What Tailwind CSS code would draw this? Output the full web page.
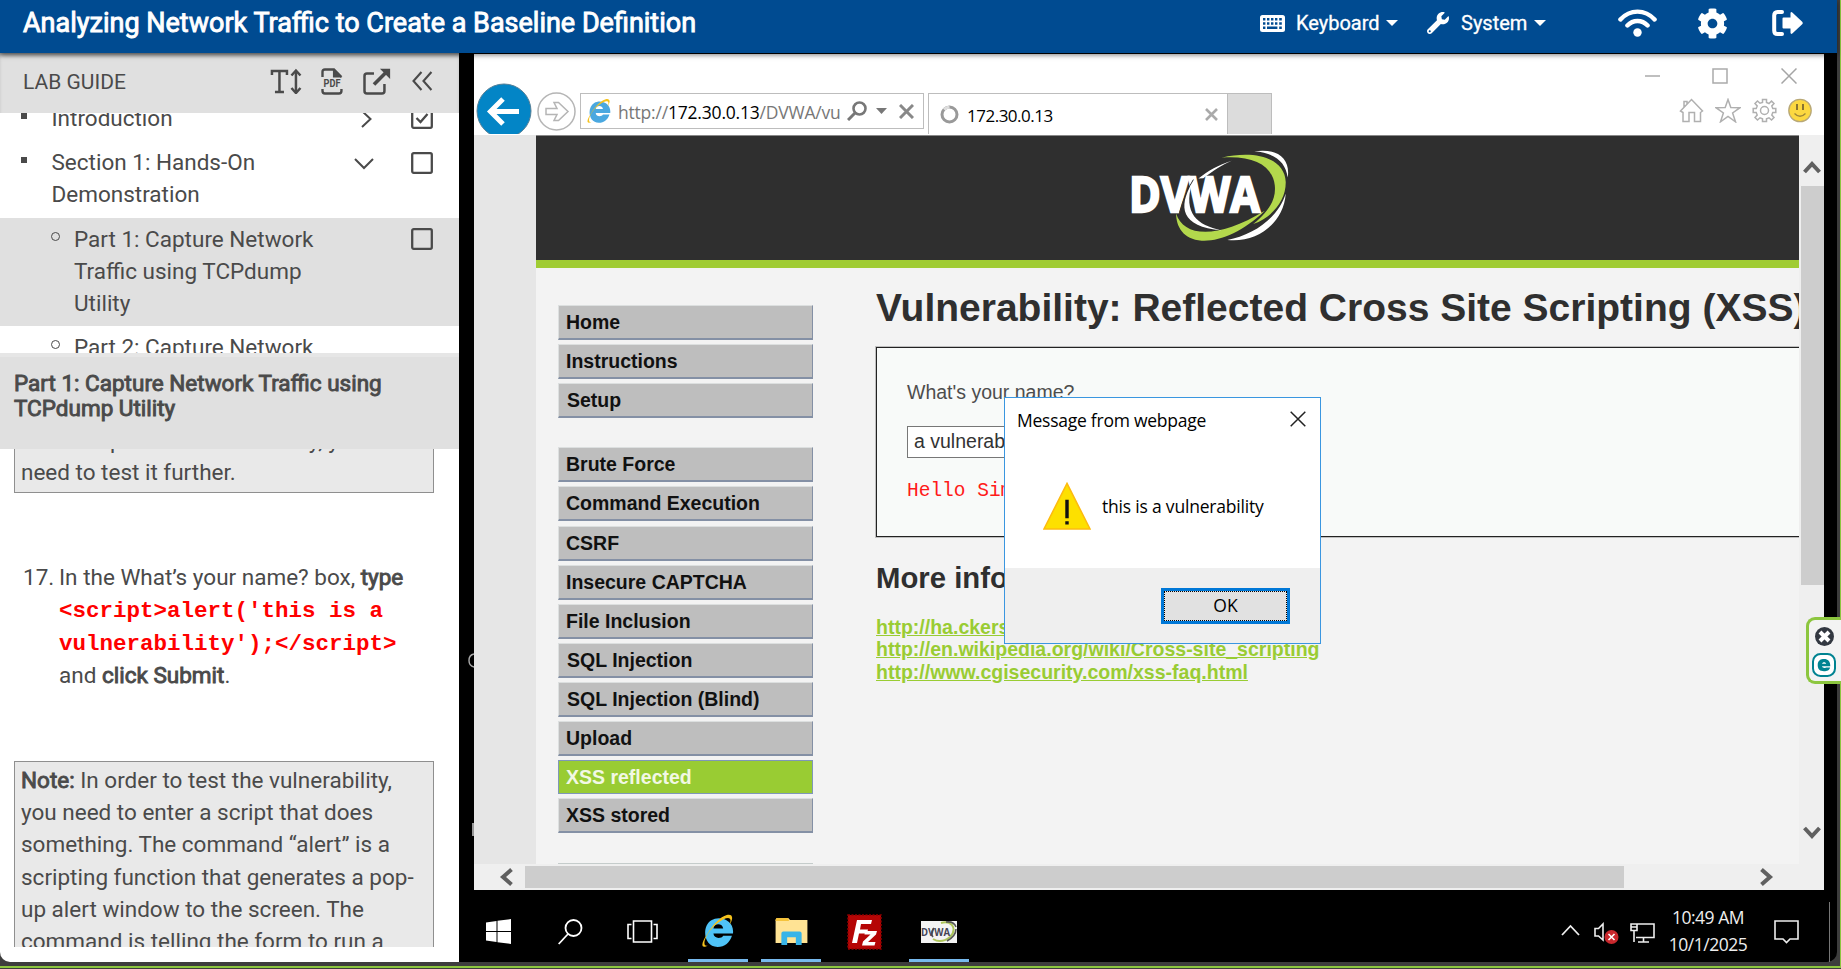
<!DOCTYPE html>
<html lang="en">
<head>
<meta charset="utf-8">
<title>Analyzing Network Traffic to Create a Baseline Definition</title>
<script src="https://cdn.jsdelivr.net/npm/@tailwindcss/browser@4"></script>
</head>
<body class="w-[1841px] h-[969px] overflow-hidden bg-[#3d3d3d] font-['Roboto',sans-serif] text-[#4a4a4a]">
<div class="relative flex h-[968px] flex-col border-b-2 border-r border-[#8cc63f] pr-[3px] pb-[4px]">

  <!-- Top bar -->
  <header class="relative z-10 flex h-[53px] shrink-0 items-start bg-[#004b91] text-white shadow-[0_2px_5px_rgba(0,0,0,0.5)]">
    <h1 class="ml-[23px] flex h-[46px] w-[680px] items-center whitespace-nowrap text-[27px] [-webkit-text-stroke:0.9px_white]">Analyzing Network Traffic to Create a Baseline Definition</h1>
    <div class="ml-[557px] flex h-[46px] items-center text-[20px]">
      <svg class="w-[25px] h-[17px]" viewBox="0 0 25 17"><rect width="25" height="17" rx="2.5" fill="#fff"/><g fill="#004b91"><path d="M3 3h2.4v2.6H3zM7 3h2.4v2.6H7zM11 3h2.4v2.6H11zM15 3h2.4v2.6H15zM19.2 3h2.6v2.6h-2.6zM3 7.2h2.4v2.6H3zM7 7.2h2.4v2.6H7zM11 7.2h2.4v2.6H11zM15 7.2h2.4v2.6H15zM19.2 7.2h2.6v2.6h-2.6zM3 11.4h2.4V14H3zM7 11.4h10.4V14H7zM19.2 11.4h2.6V14h-2.6z"/></g></svg>
      <span class="ml-[11px] w-[83px] whitespace-nowrap [-webkit-text-stroke:0.3px_white]">Keyboard</span>
      <svg class="ml-[7px] w-[12px] h-[6px]" viewBox="0 0 12 6"><path d="M0 0h12L6 6z" fill="#fff"/></svg>
      <svg class="ml-[29px] w-[22px] h-[22px]" viewBox="0 0 512 512"><path fill="#fff" d="M507.7 109.1c-2.2-9-13.500-12.100-20.100-5.500l-74.400 74.400-67.900-11.300L334 98.900l74.400-74.400c6.600-6.600 3.400-17.900-5.700-20.200-47.400-11.700-99.600.9-136.600 37.900-39.600 39.600-50.500 97.100-34.100 147.200L18.700 402.800c-25 25-25 65.500 0 90.500s65.500 25 90.500 0l213.200-213.200c50.100 16.700 107.500 5.700 147.400-34.200 37.100-37.100 49.700-89.300 37.900-136.800zM64 472c-13.200 0-24-10.800-24-24s10.700-24 24-24 24 10.700 24 24-10.700 24-24 24z"/></svg>
      <span class="ml-[12px] w-[66px] whitespace-nowrap [-webkit-text-stroke:0.3px_white]">System</span>
      <svg class="ml-[7px] w-[12px] h-[6px]" viewBox="0 0 12 6"><path d="M0 0h12L6 6z" fill="#fff"/></svg>
      <svg class="ml-[72px] w-[39px] h-[28px]" viewBox="0 0 39 28" fill="none" stroke="#fff" stroke-width="4.4" stroke-linecap="round"><path d="M2.400 10.500C12 0 27 0 36.600 10.500M9.400 16.500C15 10.500 24 10.500 29.600 16.500"/><circle cx="19.500" cy="23.500" r="4.200" fill="#fff" stroke="none"/></svg>
      <svg class="ml-[40px] w-[31px] h-[31px]" viewBox="0 0 512 512"><path fill="#fff" d="M487.4 315.700l-42.600-24.600c4.300-23.200 4.300-47 0-70.200l42.600-24.600c4.900-2.800 7.100-8.600 5.500-14-11.100-35.600-30-67.800-54.700-94.600-3.800-4.100-10-5.100-14.800-2.300L380.800 110c-17.900-15.400-38.500-27.300-60.800-35.100V25.800c0-5.600-3.900-10.500-9.400-11.700-36.700-8.200-74.300-7.800-109.200 0-5.500 1.200-9.400 6.100-9.400 11.700V75c-22.200 7.900-42.800 19.800-60.800 35.100L88.700 85.500c-4.900-2.800-11-1.900-14.800 2.300-24.700 26.700-43.600 58.900-54.700 94.600-1.700 5.400.6 11.200 5.500 14L67.300 221c-4.300 23.200-4.300 47 0 70.200l-42.600 24.600c-4.900 2.800-7.100 8.600-5.500 14 11.100 35.600 30 67.800 54.700 94.600 3.800 4.100 10 5.100 14.800 2.300l42.600-24.600c17.900 15.400 38.500 27.300 60.800 35.100v49.200c0 5.600 3.900 10.500 9.400 11.700 36.700 8.200 74.300 7.800 109.200 0 5.500-1.200 9.400-6.100 9.400-11.700v-49.200c22.200-7.900 42.800-19.800 60.800-35.100l42.600 24.600c4.900 2.800 11 1.900 14.800-2.300 24.700-26.700 43.600-58.900 54.700-94.600 1.500-5.500-.7-11.300-5.600-14.100zM256 336c-44.100 0-80-35.900-80-80s35.900-80 80-80 80 35.900 80 80-35.900 80-80 80z"/></svg>
      <svg class="ml-[44px] w-[31px] h-[28px]" viewBox="0 0 31 28"><path fill="none" stroke="#fff" stroke-width="4" stroke-linecap="round" stroke-linejoin="round" d="M10 3H5.500Q2.200 3 2.200 6.500V21.500Q2.200 25 5.500 25H10"/><path fill="#fff" d="M10.500 9.500Q10.500 8.500 11.500 8.500H18.500V4.200Q18.700 2.300 20.300 3.400L30.200 12.700Q31.300 14 30.200 15.300L20.300 24.600Q18.700 25.600 18.500 23.800V19.500H11.500Q10.500 19.500 10.500 18.500Z"/></svg>
    </div>
  </header>

  <div class="flex min-h-0 flex-1">
    <!-- Lab guide -->
    <aside class="flex w-[459px] shrink-0 flex-col overflow-hidden rounded-bl-[10px] bg-white text-[22.5px] leading-[32px]">
      <div class="flex h-[60px] shrink-0 items-center bg-[#e0e0e0] pb-[4px] pl-[23px] pr-[26px] shadow-[inset_0_4px_4px_-2px_rgba(0,0,0,0.35)]">
        <span class="w-[248px] pt-[1px] text-[21px] whitespace-nowrap">LAB GUIDE</span>
        <svg class="w-[33px] h-[26px]" viewBox="0 0 32 26" fill="none" stroke="#4a4a4a" stroke-width="2.500"><path d="M1.500 7V3H16.500V7M9 3V24M4.500 24H13.500M25.500 3V24"/><path d="M21 7.500L25.500 2.500L30 7.500M21 20L25.500 25L30 20" /></svg>
        <svg class="ml-[18px] w-[22px] h-[27px]" viewBox="0 0 22 27"><path d="M1.500 9V4Q1.500 1.500 4 1.500H13L20.500 9M1.500 21V23Q1.500 25.500 4 25.500H18Q20.500 25.500 20.500 23V21" fill="none" stroke="#4a4a4a" stroke-width="2.400"/><path d="M12 1L21 9.500H12z" fill="#4a4a4a"/><text x="11" y="19.500" text-anchor="middle" textLength="17" lengthAdjust="spacingAndGlyphs" font-family="Roboto" font-weight="700" font-size="11.500" fill="#4a4a4a">PDF</text></svg>
        <svg class="ml-[20px] w-[28px] h-[27px]" viewBox="0 0 28 27"><path d="M11 5.500H4Q1.500 5.500 1.500 8V23Q1.500 25.500 4 25.500H19Q21.500 25.500 21.500 23V16" fill="none" stroke="#4a4a4a" stroke-width="2.500"/><path d="M11 16.500L23 4.500" stroke="#4a4a4a" stroke-width="3.600"/><path d="M17 .8H27.200V11z" fill="#4a4a4a"/></svg>
        <svg class="ml-[21px] w-[21px] h-[20px]" viewBox="0 0 21 20" fill="none" stroke="#4a4a4a" stroke-width="2.100"><path d="M9.500 1L1.500 10L9.500 19M19.500 1L11.500 10L19.500 19"/></svg>
      </div>

      <div class="h-[240px] shrink-0 overflow-hidden">
        <div class="-mt-[11px] flex h-[44px] items-start">
          <i class="ml-[21px] mt-[11px] size-[6px] bg-[#4a4a4a]"></i>
          <span class="ml-[24.500px] w-[300px]">Introduction</span>
          <svg class="ml-[9.500px] mt-[8px] w-[11px] h-[18px]" viewBox="0 0 11 18" fill="none" stroke="#4a4a4a" stroke-width="2"><path d="M1 1L9.500 9L1 17"/></svg>
          <svg class="ml-[38.500px] mt-[5px] w-[22px] h-[22px]" viewBox="0 0 22 22" fill="none" stroke="#4a4a4a" stroke-width="2.300"><rect x="1.200" y="1.200" width="19.600" height="19.600" rx="1.500"/><path d="M5.500 11L9.500 15L16.500 7"/></svg>
        </div>
        <div class="flex h-[72px] items-start">
          <i class="ml-[21px] mt-[11px] size-[6px] bg-[#4a4a4a]"></i>
          <span class="ml-[24.500px] w-[250px]">Section 1: Hands-On Demonstration</span>
          <svg class="ml-[52.500px] mt-[12px] w-[20px] h-[12px]" viewBox="0 0 20 12" fill="none" stroke="#4a4a4a" stroke-width="2"><path d="M1 1L10 10L19 1"/></svg>
          <svg class="ml-[36.500px] mt-[6px] w-[22px] h-[22px]" viewBox="0 0 22 22" fill="none" stroke="#4a4a4a" stroke-width="2.300"><rect x="1.200" y="1.200" width="19.600" height="19.600" rx="1.500"/></svg>
        </div>
        <div class="flex h-[108px] items-start bg-[#e0e0e0] pt-[5px]">
          <i class="ml-[51px] mt-[9px] size-[9px] rounded-full border border-[#4a4a4a]"></i>
          <span class="ml-[14px] w-[250px]">Part 1: Capture Network Traffic using TCPdump Utility</span>
          <svg class="ml-[86.500px] mt-[5px] w-[22px] h-[22px]" viewBox="0 0 22 22" fill="none" stroke="#4a4a4a" stroke-width="2.300"><rect x="1.200" y="1.200" width="19.600" height="19.600" rx="1.500"/></svg>
        </div>
        <div class="flex items-start pt-[5px]">
          <i class="ml-[51px] mt-[9px] size-[9px] rounded-full border border-[#4a4a4a]"></i>
          <span class="ml-[14px] w-[250px]">Part 2: Capture Network</span>
        </div>
      </div>

      <div class="h-[96px] shrink-0 border-t-4 border-[#e6e6e6] bg-[#e0e0e0] pl-[14px] pt-[14px] text-[22.500px] leading-[25px] [-webkit-text-stroke:0.9px_#4a4a4a]">Part 1: Capture Network Traffic using<br>TCPdump Utility</div>

      <div class="h-[498px] shrink-0 overflow-hidden px-[14px] text-[22.500px]">
        <div class="-mt-[31px] h-[75px] w-[420px] border border-[#8f8f8f] bg-[#e9e9e9] px-[6px] pt-[5px]">This is a possible vulnerability, you<br>need to test it further.</div>
        <div class="mt-[68px] flex h-[130px]">
          <span class="ml-[9px] w-[36px] shrink-0">17.</span>
          <p class="w-[350px] leading-[32.800px] whitespace-nowrap">In the What’s your name? box, <span class="[-webkit-text-stroke:0.9px_#4a4a4a]">type</span><br><code class="relative -top-px font-['Liberation_Mono',monospace] font-bold leading-none text-[#ff0000] text-[22.500px]">&lt;script&gt;alert('this is a<br>vulnerability');&lt;/script&gt;</code><br>and <span class="[-webkit-text-stroke:0.9px_#4a4a4a]">click Submit</span>.</p>
        </div>
        <div class="mt-[70px] h-[220px] w-[420px] border border-[#8f8f8f] bg-[#e9e9e9] px-[6px] pt-[2px] leading-[32.200px] whitespace-nowrap"><span class="[-webkit-text-stroke:0.9px_#4a4a4a]">Note:</span> In order to test the vulnerability,<br>you need to enter a script that does<br>something. The command “alert” is a<br>scripting function that generates a pop-<br>up alert window to the screen. The<br>command is telling the form to run a</div>
      </div>
    </aside>

    <!-- Remote desktop -->
    <main class="relative flex min-w-0 flex-1 flex-col rounded-br-[10px] bg-black">
      <svg class="absolute left-[9px] top-[600px] w-[6px] h-[15px]" viewBox="0 0 6 15" fill="none" stroke="#aaa" stroke-width="1.400"><path d="M6 1Q1 2 1 7.500T6 14"/></svg>
      <div class="absolute left-[13px] top-[770px] h-[13px] w-[2px] bg-[#999]"></div>

      <section class="ml-[15px] mt-px flex h-[836px] w-[1350px] shrink-0 flex-col bg-white">
        <!-- Browser chrome -->
        <div class="flex h-[81px] shrink-0 items-start font-['Open_Sans',sans-serif]">
          <svg class="ml-[2px] mt-[29px] w-[56px] h-[51px]" viewBox="0 0 56 51"><circle cx="28" cy="28" r="27" fill="#0385c6" stroke="#557f96" stroke-width="1"/><path d="M43 28.500H15M27 16L14.500 28.500L27 41" fill="none" stroke="#fff" stroke-width="5"/></svg>
          <svg class="ml-[5px] mt-[38px] w-[39px] h-[39px]" viewBox="0 0 39 39" fill="none" stroke="#b5b5b5" stroke-width="1.500"><circle cx="19.500" cy="19.500" r="18.500"/><path d="M9 16.500H20L17 10.500H21.500L31 19.500L21.500 28.500H17L20 22.500H9Z"/></svg>
          <div class="ml-[4px] mt-[39px] flex h-[36px] w-[344px] items-center border-[1.500px] border-[#bdbdbd] pl-[4px]">
            <svg class="w-[26px] h-[26px]" viewBox="0 0 34 34"><path d="M30.500 21.500H23.500C22 24.500 14.500 25 14 19.500H33C34.500 6 20 1.500 12 6.500C2.500 12 4 32.500 18 32.500C25 32.500 30 28 32 21.500ZM14 14.500C14.500 9 23 9 23.500 14.500Z" fill="#4aa8e0"/><path d="M8 20C2 29 1 35 9 31C4 33 4 27 9 19C15 10 27 2 30 5C31.500 6.500 30 10 29 12C34 5 33 0 27 1.500C21 3 13 11 8 20Z" fill="#f5c21c"/></svg>
            <span class="ml-[7px] mt-[2px] w-[223px] whitespace-nowrap text-[17.500px] text-[#777] tracking-[-0.200px]">http://<span class="text-black">172.30.0.13</span>/DVWA/vu</span>
            <svg class="ml-[6px] w-[20px] h-[20px]" viewBox="0 0 20 20" fill="none" stroke="#777" stroke-width="2.600"><circle cx="12.500" cy="7.500" r="6"/><path d="M8 12L1 19" stroke-width="3"/></svg>
            <svg class="ml-[9px] w-[11px] h-[6px]" viewBox="0 0 11 6"><path d="M0 0H11L5.500 6z" fill="#777"/></svg>
            <svg class="ml-[12px] w-[15px] h-[15px]" viewBox="0 0 15 15" stroke="#888" stroke-width="3"><path d="M1 1L14 14M14 1L1 14"/></svg>
          </div>
          <div class="ml-[4px] mt-[39px] flex h-[41px] w-[299px] items-center border-l-[1.500px] border-t-[1.500px] border-[#bdbdbd] pl-[11px] text-[17px] text-black">
            <svg class="w-[19px] h-[19px]" viewBox="0 0 19 19" fill="none" stroke-width="3"><circle cx="9.500" cy="9.500" r="7.500" stroke="#999"/><path d="M4 4.500Q6 2.300 9.500 2" stroke="#ddd"/></svg>
            <span class="ml-[8px] mt-[3px] w-[236px] whitespace-nowrap tracking-[-0.500px]">172.30.0.13</span>
            <svg class="ml-[2px] w-[13px] h-[13px]" viewBox="0 0 13 13" stroke="#aaa" stroke-width="2.600"><path d="M1 1L12 12M12 1L1 12"/></svg>
          </div>
          <div class="mt-[39px] h-[41px] w-[45px] border-x-[1.500px] border-t-[1.500px] border-[#bdbdbd] bg-[#dcdcdc]"></div>
          <div class="ml-auto flex flex-col items-end pr-[12px] pt-[14px]">
            <div class="flex items-center pr-[15px]">
              <svg class="w-[15px] h-[2px]" viewBox="0 0 15 2"><path d="M0 1H15" stroke="#aaa" stroke-width="1.500"/></svg>
              <svg class="ml-[52px] w-[16px] h-[16px]" viewBox="0 0 16 16"><rect x="1" y="1" width="14" height="14" fill="none" stroke="#aaa" stroke-width="1.500"/></svg>
              <svg class="ml-[53px] w-[16px] h-[16px]" viewBox="0 0 16 16"><path d="M.5 .5L15.500 15.500M15.500 .5L.5 15.500" stroke="#a5a5a5" stroke-width="1.500"/></svg>
            </div>
            <div class="mt-[14px] flex items-center gap-[11px]">
              <svg class="w-[25px] h-[25px]" viewBox="0 0 25 25" fill="none" stroke="#b0b0b0" stroke-width="1.500"><path d="M1.500 13L12.500 1.500L23.500 13L21.500 14.500V23.500H15.500V14.500H10V23.500H4V14.500L1.500 13ZM5 9V3.500H8V6"/></svg>
              <svg class="w-[26px] h-[25px]" viewBox="0 0 26 25" fill="none" stroke="#b0b0b0" stroke-width="1.500"><path d="M13 1.500L15.800 9.500L25 9.700L17.600 15L20.500 23.800L13 18.500L5.500 23.800L8.400 15L1 9.700L10.200 9.500Z"/></svg>
              <svg class="w-[25px] h-[25px]" viewBox="0 0 25 25" fill="none" stroke="#b0b0b0" stroke-width="1.500"><path d="M10.500 1.500H14.500V4.500L17 5.500L19.500 3L22 5.500L19.800 8L20.800 10.500H23.800V14.500H20.800L19.800 17L22 19.500L19.500 22L17 19.800L14.500 20.800V23.500H10.500V20.800L8 19.800L5.500 22L3 19.500L5.200 17L4.200 14.500H1.200V10.500H4.200L5.200 8L3 5.500L5.500 3L8 5.200L10.500 4.500Z"/><circle cx="12.500" cy="12.500" r="4"/></svg>
              <svg class="w-[24px] h-[25px]" viewBox="0 0 24 25"><circle cx="12" cy="12.500" r="11.200" fill="#fcd840" stroke="#b8a878" stroke-width="1.300"/><path d="M9 6V12M15 6V12" stroke="#8a7430" stroke-width="2"/><path d="M6.500 15.500Q12 21 17.500 15.500" fill="none" stroke="#a08838" stroke-width="1.400"/></svg>
            </div>
          </div>
        </div>

        <div class="flex min-h-0 flex-1">
          <!-- Web page -->
          <div class="w-[62px] shrink-0 bg-[#e6e6e6]"></div>
          <div class="flex w-[1262.500px] shrink-0 flex-col overflow-hidden bg-[#f3f3f3] font-['Liberation_Sans',sans-serif]">
            <div class="flex h-[133px] shrink-0 items-start border-b-8 border-t border-b-[#a0cc33] border-t-[#888] bg-[#2f2f2f] pl-[594px] pt-[13px]">
              <svg class="w-[160px] h-[93px]" viewBox="630 296 480 280">
                <path d="M1003 303C1080 292 1112 330 1104 382C1098 335 1065 308 1003 303Z" fill="#fff"/>
                <path d="M1098 430C1092 520 1010 580 922 570C1000 555 1075 505 1098 430Z" fill="#fff"/>
                <path d="M905 322C1010 298 1095 325 1098 395C1099 450 1060 500 1000 522C1045 485 1070 450 1065 405C1058 345 1000 315 905 322Z" fill="#b3d84c"/>
                <path d="M768 490C790 560 890 570 1035 482C970 545 900 575 845 572C790 568 768 530 768 490Z" fill="#b3d84c"/>
                <path d="M935 331C895 345 865 360 835 385L850 384C880 360 905 345 935 331Z" fill="#fff"/>
                <text x="626" y="486" textLength="394" lengthAdjust="spacingAndGlyphs" font-family="Open Sans" font-weight="700" font-size="146" fill="#fff" stroke="#fff" stroke-width="7">DVWA</text>
                <path d="M820 388Q794 430 778 488" fill="none" stroke="#2f2f2f" stroke-width="3"/>
                <path d="M815 400C775 470 780 530 905 541C830 525 790 490 815 400Z" fill="#fff"/>
              </svg>
            </div>
            <div class="flex min-h-0 flex-1">
              <nav class="ml-[22px] mt-[37px] flex w-[255px] shrink-0 flex-col gap-[4.050px] text-[19.500px] font-bold leading-[32px] text-[#111]">
                <a class="h-[35px] border border-b-2 border-[#dcdfdf] border-b-[#8490a5] border-r-[#8490a5] bg-[#bebebe] pl-[7px]">Home</a>
                <a class="h-[35px] border border-b-2 border-[#dcdfdf] border-b-[#8490a5] border-r-[#8490a5] bg-[#bebebe] pl-[7px]">Instructions</a>
                <a class="mb-[25.300px] h-[35px] border border-b-2 border-[#dcdfdf] border-b-[#8490a5] border-r-[#8490a5] bg-[#bebebe] pl-[8px]">Setup</a>
                <a class="h-[35px] border border-b-2 border-[#dcdfdf] border-b-[#8490a5] border-r-[#8490a5] bg-[#bebebe] pl-[7px]">Brute Force</a>
                <a class="h-[35px] border border-b-2 border-[#dcdfdf] border-b-[#8490a5] border-r-[#8490a5] bg-[#bebebe] pl-[7px]">Command Execution</a>
                <a class="h-[35px] border border-b-2 border-[#dcdfdf] border-b-[#8490a5] border-r-[#8490a5] bg-[#bebebe] pl-[7px]">CSRF</a>
                <a class="h-[35px] border border-b-2 border-[#dcdfdf] border-b-[#8490a5] border-r-[#8490a5] bg-[#bebebe] pl-[7px]">Insecure CAPTCHA</a>
                <a class="h-[35px] border border-b-2 border-[#dcdfdf] border-b-[#8490a5] border-r-[#8490a5] bg-[#bebebe] pl-[7px]">File Inclusion</a>
                <a class="h-[35px] border border-b-2 border-[#dcdfdf] border-b-[#8490a5] border-r-[#8490a5] bg-[#bebebe] pl-[8px]">SQL Injection</a>
                <a class="h-[35px] border border-b-2 border-[#dcdfdf] border-b-[#8490a5] border-r-[#8490a5] bg-[#bebebe] pl-[8px]">SQL Injection (Blind)</a>
                <a class="h-[35px] border border-b-2 border-[#dcdfdf] border-b-[#8490a5] border-r-[#8490a5] bg-[#bebebe] pl-[7px]">Upload</a>
                <a class="h-[35px] border border-[#7f97b8] bg-[#99cc33] pl-[7px] text-[#f2f8e4]">XSS reflected</a>
                <a class="h-[35px] border border-b-2 border-[#dcdfdf] border-b-[#8490a5] border-r-[#8490a5] bg-[#bebebe] pl-[7px]">XSS stored</a>
                <a class="mt-[26px] h-[35px] border border-[#c5cccb] bg-[#bebebe]"></a>
              </nav>
              <article class="ml-[63px] w-[1000px] shrink-0 whitespace-nowrap">
                <h2 class="mt-[16px] h-[48px] text-[39px] font-bold leading-[48px] text-[#2f2f2f]">Vulnerability: Reflected Cross Site Scripting (XSS)</h2>
                <div class="mt-[15px] h-[190px] border-[1.500px] border-[#222] bg-[#f8faf9] pl-[30px] pt-[29px] text-[19.500px] text-[#4d4d4d] outline outline-[#222]/25">
                  <p class="leading-[30px]">What's your name?</p>
                  <div class="mt-[19px] h-[32px] w-[220px] border-[1.500px] border-[#777] bg-white pl-[6px] leading-[28px] text-[#333]">a vulnerability</div>
                  <pre class="mt-[18px] font-['Liberation_Mono',monospace] text-[19.500px] leading-[30px] text-[#ff1a1a]">Hello Simon</pre>
                </div>
                <h3 class="mt-[23px] h-[36px] text-[29.300px] font-bold leading-[36px] text-[#2f2f2f]">More info</h3>
                <p class="mt-[19.500px] text-[19.530px] font-bold leading-[22.600px] text-[#99cc33] underline">http://ha.ckers.org/xss.html<br>http://en.wikipedia.org/wiki/Cross-site_scripting<br>http://www.cgisecurity.com/xss-faq.html</p>
              </article>
            </div>
          </div>
          <!-- Vertical scrollbar -->
          <div class="flex flex-1 flex-col bg-[#efefef] pl-[2px]">
            <svg class="mt-[25px] ml-[2px] w-[18px] h-[14px]" viewBox="0 0 18 14" fill="none" stroke="#606060" stroke-width="4"><path d="M1.500 12L9 4L16.500 12"/></svg>
            <div class="mt-[12px] h-[399px] w-[23px] bg-[#cdcdcd]"></div>
            <svg class="mt-[241px] ml-[2px] w-[18px] h-[14px]" viewBox="0 0 18 14" fill="none" stroke="#606060" stroke-width="4"><path d="M1.500 2L9 10L16.500 2"/></svg>
          </div>
        </div>
        <!-- Horizontal scrollbar -->
        <div class="flex h-[26px] shrink-0 items-center bg-[#efefef]">
          <svg class="ml-[25px] w-[14px] h-[18px]" viewBox="0 0 14 18" fill="none" stroke="#606060" stroke-width="4"><path d="M12.500 1.500L4 9L12.500 16.500"/></svg>
          <div class="ml-[12px] h-[22px] w-[1099px] bg-[#cdcdcd]"></div>
          <svg class="ml-[136px] w-[14px] h-[18px]" viewBox="0 0 14 18" fill="none" stroke="#606060" stroke-width="4"><path d="M1.500 1.500L10 9L1.500 16.500"/></svg>
        </div>
      </section>

      <!-- Alert dialog -->
      <div class="absolute left-[545px] top-[344px] flex h-[247px] w-[317px] flex-col border-[1.500px] border-[#3a96e0] bg-white font-['Open_Sans',sans-serif] text-[17.500px] text-black whitespace-nowrap">
        <div class="flex items-start pl-[12px] pt-[9px]">
          <span class="w-[273px] leading-[26px] tracking-[-0.250px]">Message from webpage</span>
          <svg class="mt-[4px] w-[16px] h-[16px]" viewBox="0 0 16 16"><path d="M.7 .7L15.300 15.300M15.300 .7L.7 15.300" stroke="#222" stroke-width="1.500"/></svg>
        </div>
        <div class="flex items-start pl-[38px] pt-[49px]">
          <svg class="w-[48px] h-[48px]" viewBox="0 0 49 49"><path d="M24.500 1.500L48 48H1Z" fill="#fde000" stroke="#fdbb10" stroke-width="1.600"/><path d="M24.500 18V37M24.500 40V43.500" stroke="#111" stroke-width="3.500"/></svg>
          <span class="ml-[11px] mt-[11px] leading-[26px] tracking-[-0.200px]">this is a vulnerability</span>
        </div>
        <div class="mt-auto h-[75px] bg-[#efefef] pl-[156px] pt-[20px]">
          <div class="h-[36px] w-[129px] border-[3px] border-[#0078d7] bg-[#e1e1e1]"><div class="h-full border border-dotted border-black text-center leading-[27px]">OK</div></div>
        </div>
      </div>

      <!-- Taskbar -->
      <div class="flex h-[72px] items-start">
        <svg class="ml-[27px] mt-[29px] w-[25px] h-[25px]" viewBox="0 0 25 25" fill="#fff"><path d="M0 3.500L10.500 2V12H0zM11.500 1.800L25 0V12H11.500zM0 13H10.500V23L0 21.500zM11.500 13H25V25L11.500 23.200z"/></svg>
        <svg class="ml-[47px] mt-[29px] w-[25px] h-[26px]" viewBox="0 0 25 26" fill="none" stroke="#fff" stroke-width="1.800"><circle cx="15.500" cy="9" r="8"/><path d="M10 15L.7 25"/></svg>
        <svg class="ml-[44px] mt-[30px] w-[31px] h-[23px]" viewBox="0 0 31 23" fill="none" stroke="#fff" stroke-width="1.600"><path d="M6.500 1H24.500V22H6.500ZM4.500 4.500H1V18.500H4.500M26.500 4.500H30V18.500H26.500"/></svg>
        <div class="ml-[30px] flex h-[72px] w-[60px] items-start justify-center border-b-[3px] border-[#76b9ed] pt-[23px]">
          <svg class="mr-[3px] w-[35px] h-[36px]" viewBox="0 0 34 34"><path d="M30.500 21.500H23.500C22 24.500 14.500 25 14 19.500H33C34.500 6 20 1.500 12 6.500C2.500 12 4 32.500 18 32.500C25 32.500 30 28 32 21.500ZM14 14.500C14.500 9 23 9 23.500 14.500Z" fill="#4fc3f7"/><path d="M8 20C2 29 1 35 9 31C4 33 4 27 9 19C15 10 27 2 30 5C31.500 6.500 30 10 29 12C34 5 33 0 27 1.500C21 3 13 11 8 20Z" fill="#f5c21c"/></svg>
        </div>
        <div class="ml-[13px] flex h-[72px] w-[60px] items-start justify-center border-b-[3px] border-[#76b9ed] pt-[28px]">
          <svg class="w-[33px] h-[27px]" viewBox="0 0 33 28"><path d="M0 2Q0 0 2 0H13L15 2H33V26H0Z" fill="#ffe394"/><path d="M0 2Q0 0 2 0H13L14 3H0Z" fill="#f5c33b"/><path d="M6 28V16Q6 14 8 14H25Q27 14 27 16V28H21V20H12V28Z" fill="#38b4e8"/></svg>
        </div>
        <div class="ml-[26px] mt-[24px]">
          <svg class="w-[35px] h-[36px]" viewBox="0 0 35 36"><rect x="1" y="1" width="33" height="34" fill="#b50505" stroke="#8d0000" stroke-width="1.500" stroke-dasharray="2 1.500"/><path d="M5 29L10 6H25L24 10H14L13 15.500H21L20 19.500H12L10 29ZM18 17H30L29 20.500L21 28H28.500L27.500 31.500H15L16 27.500L23.500 20.500H17.500Z" fill="#fff"/></svg>
        </div>
        <div class="ml-[27px] flex h-[72px] w-[60px] items-start justify-center border-b-[3px] border-[#76b9ed] pt-[31px]">
          <svg class="w-[36px] h-[22px]" viewBox="0 0 36 22"><rect width="36" height="22" fill="#f4f4f4"/><path d="M12 18Q20 23 29 16Q35 10 31 4Q27 0 20 2" fill="none" stroke="#aec65a" stroke-width="2"/><path d="M26 20Q35 15 35 8M25 1Q33 0 35 6M12 16Q9 12 13 7" fill="none" stroke="#555" stroke-width="1.600"/><text x="0" y="14.500" font-family="Open Sans" font-weight="700" font-size="10.500" textLength="29" lengthAdjust="spacingAndGlyphs" fill="#445">DVWA</text></svg>
        </div>
        <svg class="ml-[592px] mt-[34px] w-[19px] h-[12px]" viewBox="0 0 19 12" fill="none" stroke="#eee" stroke-width="1.800"><path d="M1 11L9.500 2L18 11"/></svg>
        <svg class="ml-[14px] mt-[32px] w-[25px] h-[23px]" viewBox="0 0 25 23"><path d="M9 2V18L4.500 14H1V6.500H4.500Z" fill="none" stroke="#eee" stroke-width="1.600"/><circle cx="17.500" cy="15" r="7" fill="#c9282d"/><path d="M14.500 12L20.500 18M20.500 12L14.500 18" stroke="#fff" stroke-width="1.600"/></svg>
        <svg class="ml-[11px] mt-[32px] w-[25px] h-[22px]" viewBox="0 0 25 22" fill="none" stroke="#eee" stroke-width="1.600"><path d="M7 2H24V15.500H6M13.500 15.500V20M8 20H19M1 2H7V8.500H1ZM1 5H7M4 8.500V20"/></svg>
        <div class="ml-[10px] mt-[14px] w-[86px] text-center font-['Open_Sans',sans-serif] text-[17.500px] leading-[27px] tracking-[-0.500px] text-[#eee] whitespace-nowrap">10:49 AM<br>10/1/2025</div>
        <svg class="ml-[23px] mt-[30px] w-[25px] h-[24px]" viewBox="0 0 25 24" fill="none" stroke="#eee" stroke-width="1.600"><path d="M1 1H24V19H16L12.500 22.500L9 19H1Z"/></svg>
        <div class="ml-[30px] mt-[12px] h-[60px] w-px bg-[#777]"></div>
      </div>
    </main>
  </div>

  <!-- Side widget -->
  <div class="absolute right-[-1px] top-[617px] z-20 flex h-[67px] w-[35px] flex-col items-center gap-[7px] rounded-l-[9px] border-[3px] border-r-0 border-[#8cc63f] bg-[#f3f3f3] pr-[2px] pt-[7px]">
    <svg class="w-[19px] h-[19px]" viewBox="0 0 19 19"><circle cx="9.500" cy="9.500" r="9.500" fill="#333841"/><path d="M5 5L14 14M14 5L5 14" stroke="#fff" stroke-width="4"/></svg>
    <svg class="w-[24px] h-[24px]" viewBox="0 0 24 24"><rect x="1" y="1" width="22" height="22" rx="7.500" fill="#fff" stroke="#008391" stroke-width="2"/><path d="M5.700 12C5.700 7 9 6 12 6C16 6 18.300 8 18.300 13.300H10C10.300 15.500 14 15 14.300 14.500H18.100C17.500 17.500 15 18.200 12 18.200C8 18.200 5.700 16.500 5.700 12ZM10 10.800H14.200C14 8.700 10.300 8.700 10 10.800Z" fill="#008391"/></svg>
  </div>
</div>
</body>
</html>
